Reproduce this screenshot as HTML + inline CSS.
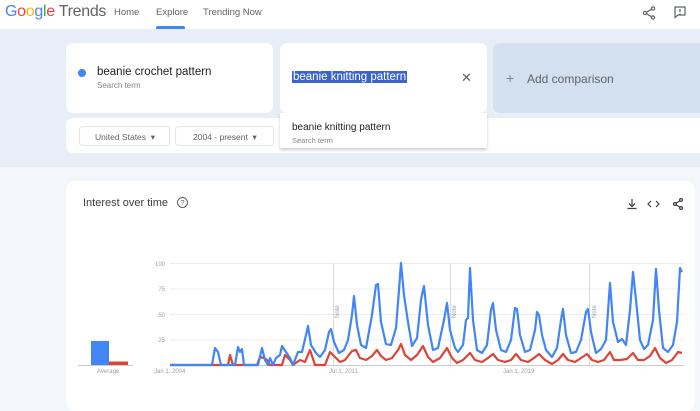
<!DOCTYPE html>
<html><head><meta charset="utf-8"><style>
*{margin:0;padding:0;box-sizing:border-box}
body{width:700px;height:401px;overflow:hidden;background:#f3f6fb;font-family:"Liberation Sans",sans-serif;position:relative;color:#202124}
.a{position:absolute}
</style></head><body>
<div class="a" style="left:0;top:0;width:700px;height:29px;background:#fff"></div>
<div class="a" style="left:0;top:29px;width:700px;height:138px;background:#e8eef7"></div>
<div class="a" style="left:5px;top:3px;font-size:16px;letter-spacing:-0.3px"><span style="color:#4285f4">G</span><span style="color:#ea4335">o</span><span style="color:#fbbc05">o</span><span style="color:#4285f4">g</span><span style="color:#34a853">l</span><span style="color:#ea4335">e</span> <span style="color:#5f6368">Trends</span></div>
<div class="a" style="left:114px;top:7px;font-size:9.5px;color:#5f6368">Home</div>
<div class="a" style="left:156px;top:7px;font-size:9.5px;color:#5f6368">Explore</div>
<div class="a" style="left:156px;top:26px;width:29px;height:3px;background:#4285f4;border-radius:2px 2px 0 0"></div>
<div class="a" style="left:203px;top:7px;font-size:9.5px;color:#5f6368">Trending Now</div>
<svg class="a" style="left:641px;top:5px" width="16" height="16" viewBox="0 0 16 16" fill="none" stroke="#5f6368" stroke-width="1.2"><circle cx="12" cy="3.5" r="1.6"/><circle cx="4" cy="8" r="1.6"/><circle cx="12" cy="12.5" r="1.6"/><path d="M5.5 7.2 10.5 4.3M5.5 8.8 10.5 11.7"/></svg>
<svg class="a" style="left:673px;top:5px" width="14" height="14" viewBox="0 0 14 14" fill="none" stroke="#5f6368" stroke-width="1.2"><path d="M2 2h10v8H5l-3 2.5z"/><path d="M7 4v3.3M7 8.5v1"/></svg>

<div class="a" style="left:66px;top:43px;width:207px;height:70px;background:#fff;border-radius:7px"></div>
<div class="a" style="left:78px;top:69px;width:8px;height:8px;border-radius:50%;background:#4285f4"></div>
<div class="a" style="left:97px;top:66px;font-size:11.5px">beanie crochet pattern</div>
<div class="a" style="left:97px;top:81px;font-size:8px;color:#80868b">Search term</div>

<div class="a" style="left:280px;top:43px;width:207px;height:70px;background:#fff;border-radius:7px"></div>
<div class="a" style="left:292px;top:71px;font-size:11.5px;background:#3b63c8;color:#fff;padding:0 1px">beanie knitting pattern</div>
<div class="a" style="left:461px;top:70px;font-size:13px;color:#5f6368">✕</div>

<div class="a" style="left:493px;top:43px;width:207px;height:70px;background:#d3e0f0;border-radius:7px 0 0 7px"></div>
<div class="a" style="left:506px;top:70px;font-size:14px;color:#80868b">+</div>
<div class="a" style="left:527px;top:72px;font-size:12px;color:#5f6368">Add comparison</div>

<div class="a" style="left:66px;top:118px;width:640px;height:35px;background:#fff;border-radius:7px"></div>
<div class="a" style="left:79px;top:126px;width:91px;height:20px;border:1px solid #e3e5e8;border-radius:4px;font-size:8.5px;color:#5f6368;padding:5px 0 0 15px">United States &nbsp;▾</div>
<div class="a" style="left:175px;top:126px;width:99px;height:20px;border:1px solid #e3e5e8;border-radius:4px;font-size:8.5px;color:#5f6368;padding:5px 0 0 17px">2004 - present &nbsp;▾</div>

<div class="a" style="left:280px;top:113px;width:207px;height:35px;background:#fff;box-shadow:0 2px 3px rgba(0,0,0,.2)"></div>
<div class="a" style="left:292px;top:122px;font-size:10px">beanie knitting pattern</div>
<div class="a" style="left:292px;top:136px;font-size:7.5px;color:#80868b">Search term</div>

<div class="a" style="left:66px;top:181px;width:629px;height:230px;background:#fff;border-radius:9px"></div>
<div class="a" style="left:83px;top:197px;font-size:11px;color:#3c4043">Interest over time</div>
<div class="a" style="left:177px;top:197px;width:11px;height:11px;border:1px solid #5f6368;border-radius:50%;font-size:7.5px;text-align:center;line-height:10px;color:#5f6368">?</div>
<svg class="a" style="left:625px;top:197px;width:70px;height:14px" viewBox="0 0 70 14" fill="none" stroke="#3c4043" stroke-width="1.2"><path d="M7 2v7M4 6.5 7 9.5 10 6.5M2.5 11.5h9"/><path d="M26 4 23 7 26 10M31 4 34 7 31 10"/><circle cx="56" cy="3" r="1.4"/><circle cx="50" cy="7" r="1.4"/><circle cx="56" cy="11" r="1.4"/><path d="M51 6.3 55 3.7M51 7.7 55 10.3"/></svg>

<svg class="a" style="left:0;top:0" width="700" height="401">
<g stroke="#ececec" stroke-width="1"><path d="M170 263.5H684M170 289H684M170 314.5H684M170 340H684"/><path d="M333.5 263V365M450.5 263V365M589.5 263V365" stroke="#dadada"/></g>
<g font-size="6" fill="#9aa0a6" font-family="Liberation Sans">
<text x="165" y="266" text-anchor="end">100</text><text x="165" y="291" text-anchor="end">75</text><text x="165" y="317" text-anchor="end">50</text><text x="165" y="342" text-anchor="end">25</text>
<text x="154" y="373">Jan 1, 2004</text><text x="329" y="373">Jul 1, 2011</text><text x="503" y="373">Jan 1, 2019</text><text x="97" y="373">Average</text>
<text transform="translate(339,318) rotate(-90)">Note</text><text transform="translate(456,318) rotate(-90)">Note</text><text transform="translate(596,318) rotate(-90)">Note</text></g>
<path d="M78 365.5H133M170 365.5H684" stroke="#ccc"/>
<rect x="91" y="341" width="18" height="24" fill="#4285f4"/><rect x="109" y="361.5" width="19" height="3.5" fill="#db4437"/>
<polyline fill="none" stroke="#db4437" stroke-width="2.2" stroke-linejoin="round" points="170,365 228,365 230,355 233,365 257,365 260,357 264,358 267,360 270,365 282,365 285,355 290,360 293,365 300,360 305,362 310,350 315,365 325,365 330,352 334,356 340,362 345,360 352,351 356,350 360,358 366,360 372,356 377,350 381,356 386,360 392,358 398,350 401,344 405,355 411,360 417,355 423,346 428,357 433,362 440,358 447,348 452,358 457,363 463,360 470,353 475,360 482,362 488,358 493,354 498,360 505,362 511,360 516,354 521,360 528,362 534,358 539,354 545,360 552,364 558,360 563,354 568,360 575,362 581,358 587,354 592,360 598,362 604,360 610,352 614,360 620,360 627,359 633,353 638,360 644,360 650,356 655,348 660,358 666,363 672,360 678,352 682,353"/>
<polyline fill="none" stroke="#4285f4" stroke-width="2.2" stroke-linejoin="round" points="170,365 212,365 215,348 218,352 221,365 235,365 238,347 240,352 242,349 244,365 258,365 262,348 265,360 268,365 270,358 273,365 276,358 280,355 282,346 286,352 290,358 293,365 298,352 302,352 306,335 308,326 311,345 316,353 320,357 325,350 329,332 331,329 334,342 339,353 344,350 348,340 352,315 354,296 357,325 361,345 366,348 372,315 376,285 378,284 381,322 386,344 391,345 396,328 399,290 401,263 404,295 408,322 412,346 417,338 421,300 423,290 424,286 428,325 433,350 438,348 444,320 447,303 450,330 455,348 458,352 463,345 466,320 468,318 470,268 473,320 477,350 482,353 487,345 491,310 493,303 496,330 501,350 506,352 511,340 515,308 517,309 520,335 525,352 530,350 535,330 537,312 539,315 542,335 546,350 552,357 557,348 561,320 563,309 566,335 571,353 576,352 581,340 586,312 588,309 591,332 596,353 601,349 606,340 610,283 613,322 618,342 622,339 626,345 630,310 633,272 636,300 640,340 644,349 648,345 653,320 656,269 659,310 663,348 668,352 673,345 677,322 680,268 682,272"/>
</svg>
</body></html>
